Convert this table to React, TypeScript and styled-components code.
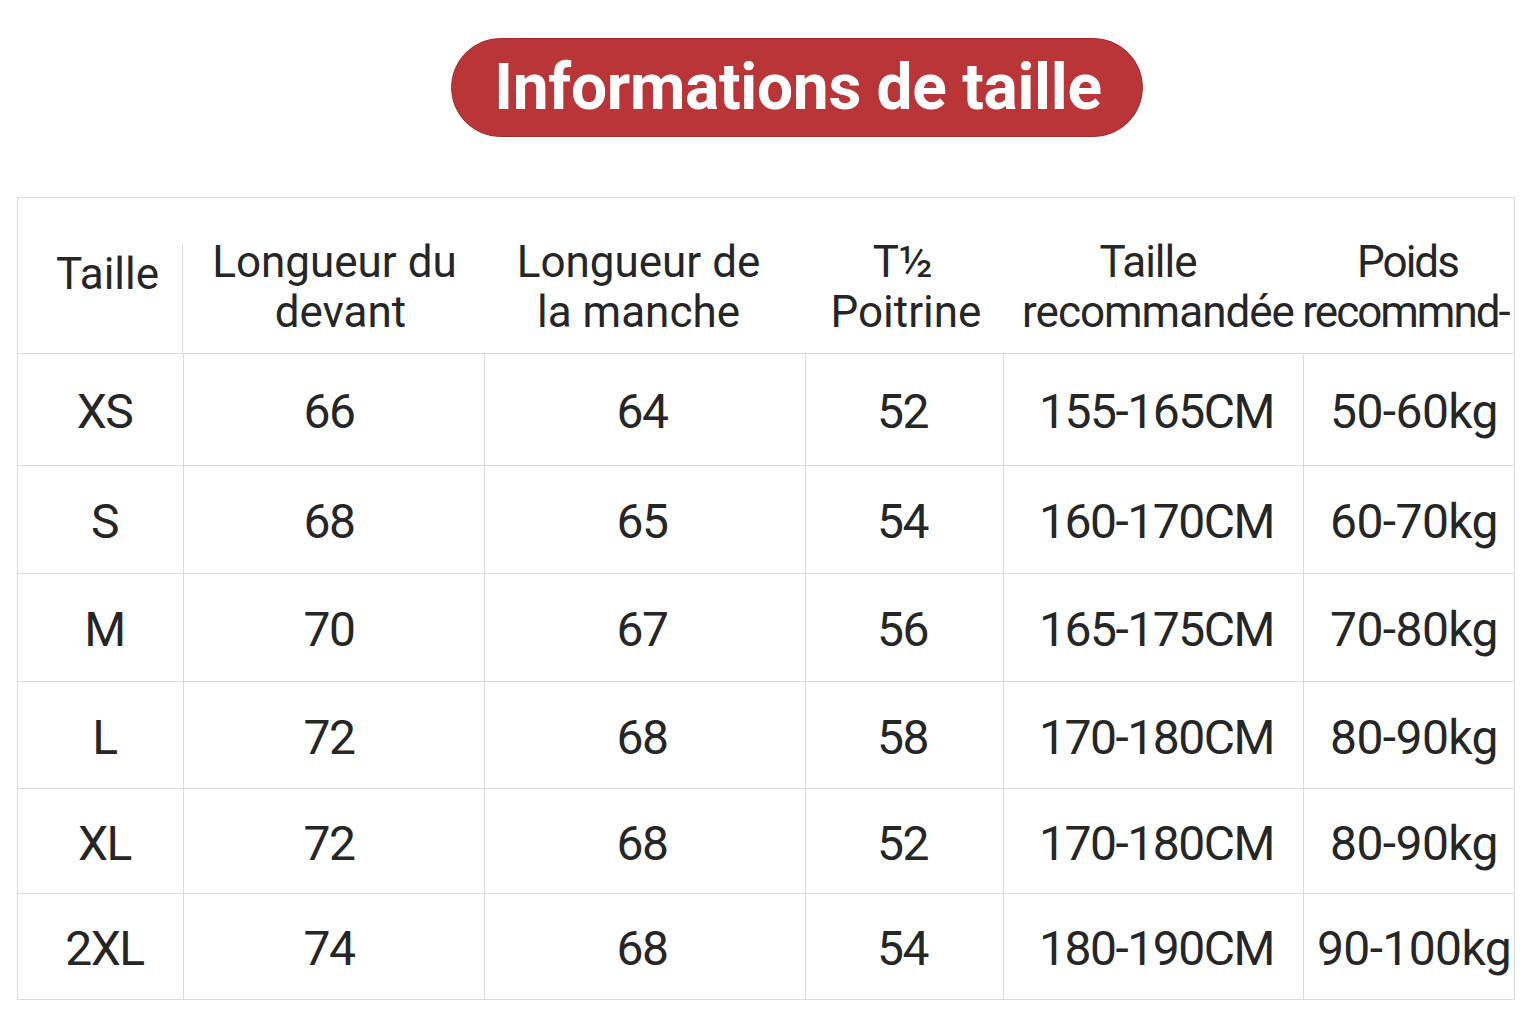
import React from 'react'
import styled, { createGlobalStyle } from 'styled-components'

const GlobalStyle = createGlobalStyle`
    html, body {
        margin: 0;
        padding: 0;
        background: #ffffff;
        font-family: Roboto, "Liberation Sans", Arial, sans-serif;
    }
    * {
        box-sizing: border-box;
    }
`

const COLUMNS = '165px 301px 321px 198px 300px 211px'

// moves centred content sideways by `shift` px using padding on one side
const shiftPadding = (shift = 0) =>
    shift >= 0 ? `padding-left: ${shift * 2}px;` : `padding-right: ${-shift * 2}px;`

const Page = styled.div`
    width: 1536px;
    height: 1024px;
    padding-top: 38px;
`

const TitleRow = styled.div`
    display: flex;
    justify-content: center;
    padding-left: 58px;
`

const TitlePill = styled.div`
    height: 99px;
    padding: 0 40px 0 42px;
    display: flex;
    align-items: center;
    background: #b93538;
    border: 1.5px solid #a72a2e;
    border-radius: 50px;
    color: #ffffff;
    font-size: 64px;
    font-weight: 700;
    letter-spacing: -0.3px;
    line-height: 1;
`

const Table = styled.div`
    width: 1498px;
    margin: 60px 0 0 17px;
    border: 1px solid #dcdcdc;
    color: #262626;
`

const HeaderRow = styled.div`
    display: grid;
    grid-template-columns: ${COLUMNS};
    height: 155px;
`

const HeadCell = styled.div<{ $top?: number; $tight?: number; $shift?: number }>`
    position: relative;
    display: flex;
    flex-direction: column;
    align-items: center;
    justify-content: flex-start;
    padding-top: ${({ $top }) => $top ?? 39}px;
    ${({ $shift }) => shiftPadding($shift)}
    font-size: 44px;
    line-height: 50px;
    letter-spacing: ${({ $tight }) => $tight ?? 0}px;
    white-space: nowrap;
    text-align: center;
`

const HeadLine = styled.span<{ $shift?: number }>`
    ${({ $shift }) => shiftPadding($shift)}
`

// the first header column has a short divider that starts below the top edge
const FirstHeadCell = styled(HeadCell)`
    &::after {
        content: '';
        position: absolute;
        right: 0;
        top: 46px;
        bottom: 0;
        width: 1px;
        background: #dcdcdc;
    }
`

const Row = styled.div<{ $height: number }>`
    display: grid;
    grid-template-columns: ${COLUMNS};
    height: ${({ $height }) => $height}px;
    border-top: 1px solid #dcdcdc;
`

const Cell = styled.div<{ $shift?: number; $spacing?: number }>`
    display: flex;
    align-items: center;
    justify-content: center;
    ${({ $shift }) => shiftPadding($shift)}
    font-size: 48px;
    letter-spacing: ${({ $spacing }) => $spacing ?? -1.5}px;
    white-space: nowrap;
    padding-top: 4px;

    & + & {
        border-left: 1px solid #dcdcdc;
    }
`

const sizes = [
    ['XS', '66', '64', '52', '155-165CM', '50-60kg'],
    ['S', '68', '65', '54', '160-170CM', '60-70kg'],
    ['M', '70', '67', '56', '165-175CM', '70-80kg'],
    ['L', '72', '68', '58', '170-180CM', '80-90kg'],
    ['XL', '72', '68', '52', '170-180CM', '80-90kg'],
    ['2XL', '74', '68', '54', '180-190CM', '90-100kg'],
]

const rowHeights = [112, 108, 108, 107, 105, 106]
const shifts = [4, -5, -3, -2, 3, 5]
const spacing = [-1.5, -1.5, -1.5, -1.5, -1.5, -0.6]

const App = () => {
    return (
        <Page>
            <GlobalStyle />
            <TitleRow>
                <TitlePill>Informations de taille</TitlePill>
            </TitleRow>
            <Table>
                <HeaderRow>
                    <FirstHeadCell $top={51} $shift={7}>Taille</FirstHeadCell>
                    <HeadCell $shift={1}>
                        <span>Longueur du</span>
                        <HeadLine $shift={6}>devant</HeadLine>
                    </HeadCell>
                    <HeadCell $shift={-6}>
                        <span>Longueur de</span>
                        <span>la manche</span>
                    </HeadCell>
                    <HeadCell $shift={2}>
                        <HeadLine $shift={-3}>T½</HeadLine>
                        <span>Poitrine</span>
                    </HeadCell>
                    <HeadCell $tight={-1} $shift={5}>
                        <HeadLine $shift={-10}>Taille</HeadLine>
                        <span>recommandée</span>
                    </HeadCell>
                    <HeadCell $tight={-2} $shift={-1}>
                        <span>Poids</span>
                        <HeadLine $shift={-2}>recommnd-</HeadLine>
                    </HeadCell>
                </HeaderRow>
                {sizes.map((row, r) => (
                    <Row key={row[0]} $height={rowHeights[r]}>
                        {row.map((value, i) => (
                            <Cell key={i} $shift={shifts[i]} $spacing={spacing[i]}>{value}</Cell>
                        ))}
                    </Row>
                ))}
            </Table>
        </Page>
    )
}

export default App
